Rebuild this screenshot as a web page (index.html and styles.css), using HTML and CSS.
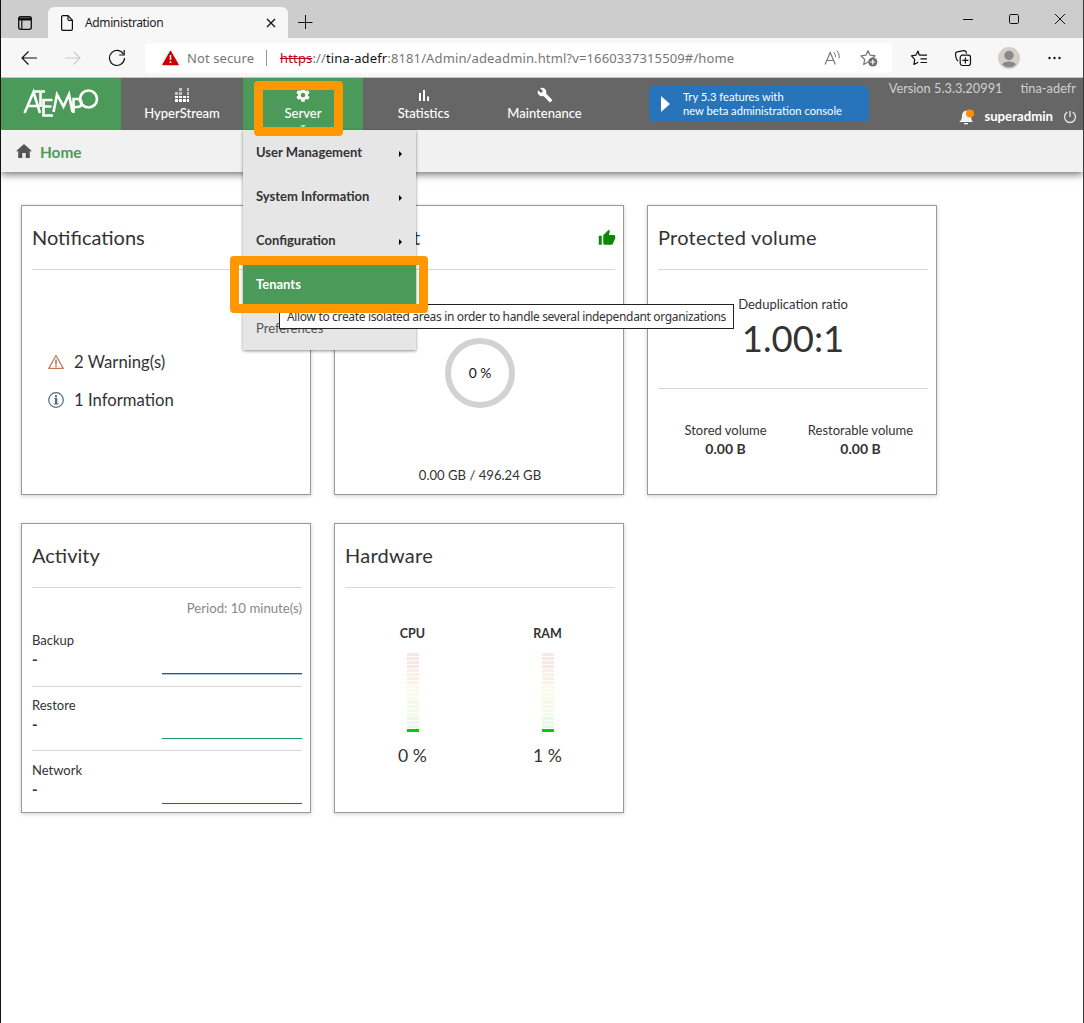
FILE: index.html
```html
<!DOCTYPE html>
<html lang="en">
<head>
<meta charset="utf-8">
<title>Administration</title>
<link rel="stylesheet" href="styles.css">
</head>
<body>
<div class="window">
  <div class="tabstrip">
    <svg class="tab-actions" width="16" height="16" viewBox="0 0 16 16"><rect x="1.7" y="1.7" width="12.6" height="12.6" rx="2" fill="none" stroke="#111" stroke-width="1.3"/><path d="M1.5 2.5h13v3h-13z" fill="#111"/><path d="M4.8 5v9" stroke="#111" stroke-width="1.2"/></svg>
    <div class="tab">
      <svg width="14" height="18" viewBox="0 0 14 18" fill="none" stroke="#111" stroke-width="1.2"><path d="M1.6 3a1.4 1.4 0 0 1 1.4-1.4h5l4.4 4.6v8.8a1.4 1.4 0 0 1-1.4 1.4H3A1.4 1.4 0 0 1 1.6 15z"/><path d="M8 1.8v3.4q0 1.1 1.1 1.1h3.3"/></svg>
      <span class="tab-title">Administration</span>
      <svg class="tab-close" width="10" height="10" viewBox="0 0 10 10"><path d="M1 1l8 8M9 1L1 9" stroke="#111" stroke-width="1.3"/></svg>
    </div>
    <svg class="tab-new" width="16" height="16" viewBox="0 0 16 16"><path d="M8.5 1v14M1 8.500h14.500" stroke="#111" stroke-width="1"/></svg>
    <div class="win-controls">
      <svg width="12" height="12" viewBox="0 0 12 12"><path d="M1 6.500h10" stroke="#111"/></svg>
      <svg width="12" height="12" viewBox="0 0 12 12"><rect x="1.500" y="1.500" width="9" height="9" rx="1.200" fill="none" stroke="#111"/></svg>
      <svg width="12" height="12" viewBox="0 0 12 12"><path d="M1 1l10 10M11 1L1 11" stroke="#111"/></svg>
    </div>
  </div>

  <div class="toolbar">
    <svg class="nav-back" width="18" height="16" viewBox="0 0 18 16" fill="none" stroke="#111" stroke-width="1.200"><path d="M17 8H2M8.500 1.500L2 8l6.500 6.500"/></svg>
    <svg class="nav-forward" width="18" height="16" viewBox="0 0 18 16" fill="none" stroke="#ccc" stroke-width="1.200"><path d="M1 8h15M9.500 1.500L16 8l-6.500 6.500"/></svg>
    <svg class="nav-reload" width="18" height="18" viewBox="0 0 18 18" fill="none" stroke="#111" stroke-width="1.200"><path d="M15.500 5.200A7.500 7.500 0 1 0 16.500 9"/><path d="M16.200 1v5h-5"/></svg>
    <div class="address">
      <svg width="17" height="16" viewBox="0 0 17 16"><path d="M8.500 1.500L16 14.500H1z" fill="#c00" stroke="#c00" stroke-width="1.500" stroke-linejoin="round"/><path d="M8.500 5v5M8.500 11.300v1.800" stroke="#fff" stroke-width="1.500"/></svg>
      <span class="insecure">Not secure</span>
      <span class="divider"></span>
      <span class="url"><s>https</s>://<b>tina-adefr</b>:8181/Admin/adeadmin.html?v=1660337315509#/home</span>
      <svg class="read-aloud" width="18" height="18" viewBox="0 0 18 18" fill="none" stroke="#767676" stroke-width="1.200"><path d="M1 15.500L6.200 3.500l5.200 12M2.800 11.500h6.800"/><path d="M9.800 3.200q2 2 1.600 5M12.800 1.500q3.200 3 2.400 7.800" stroke-width="1"/></svg>
      <svg class="add-fav" width="18" height="18" viewBox="0 0 18 18"><path d="M8 1.500l2 4.700 5 .5-3.700 3.300 1 2.400M8 13l-4.300 2.500 1-5L1 6.800l5-.6 2-4.700" fill="none" stroke="#767676" stroke-width="1.200" stroke-linejoin="round"/><circle cx="12.800" cy="13" r="4.600" fill="#6e6e6e"/><path d="M12.800 10.500v5M10.300 13h5" stroke="#fff" stroke-width="1.200"/></svg>
    </div>
    <div class="browser-tools">
      <svg width="18" height="18" viewBox="0 0 18 18" fill="none" stroke="#111" stroke-width="1.200" stroke-linejoin="round"><path d="M9.300 6.200L8 2 5.900 6.200 1.500 6.800l3.200 3.500-.8 5.200 4.300-2.300M9.300 6.200h7.700M10.500 9.800H17M10.500 13.500H17"/></svg>
      <svg width="18" height="18" viewBox="0 0 18 18" fill="none" stroke="#111" stroke-width="1.200"><rect x="6.200" y="6.200" width="10.300" height="10.300" rx="2.200"/><path d="M11.400 8.500v6M8.400 11.400h6M4 12Q2.300 10.500 2 8.500L1.500 5.200Q1.300 3.300 3.200 2.800L9.500 1.700Q12 1.500 12.600 4.500"/></svg>
      <svg width="22" height="22" viewBox="0 0 22 22"><circle cx="11" cy="11" r="11" fill="#d2cfcb"/><circle cx="11" cy="8.500" r="4.700" fill="#8b8987"/><path d="M4 17.500a7.500 4.700 0 0 1 14 0 10 10 0 0 1-14 0z" fill="#8b8987"/></svg>
      <svg width="16" height="4" viewBox="0 0 16 4" fill="#111"><circle cx="3.500" cy="2" r="1.200"/><circle cx="8.500" cy="2" r="1.200"/><circle cx="13.500" cy="2" r="1.200"/></svg>
    </div>
  </div>

  <header class="app-header">
    <div class="brand">
      <svg width="76" height="30" viewBox="0 0 76 30" fill="none" stroke="#fff" stroke-width="2.600"><path d="M1.500 25L10.500 4l6.500 21M5.500 18h9M11 3.500h11M17.500 3.500v15.500M29.500 12h-9v15.500h9.500M20.500 18.500h8M30.500 24L34 6.500l6.500 12L46 6.500l3.500 17.500M50.500 25V11h4q4 0 4 4t-4 4h-4"/><circle cx="65.500" cy="11" r="8.500"/></svg>
    </div>
    <nav class="main-nav">
      <div class="nav-item">
        <svg width="16" height="16" viewBox="0 0 16 16" fill="#fff"><path d="M1 12h3v3H1zM5 12h3v3H5zM9 12h3v3H9zM13 12h2v3h-2zM1 9h3v2H1zM5 9h3v2H5zM9 9h3v2H9zM13 9h2v2h-2z"/><path opacity=".6" d="M1 5h3v3H1zM5 5h3v3H5zM13 5h2v3h-2zM5 1h3v3H5zM13 1h2v3h-2z"/></svg>
        <span>HyperStream</span>
      </div>
      <div class="nav-item active">
        <svg width="16" height="16" viewBox="0 0 24 24" fill="#fff"><path d="M19.430 12.980c.04-.32.07-.64.07-.98s-.03-.66-.07-.98l2.110-1.650c.19-.15.24-.42.12-.64l-2-3.460c-.12-.22-.39-.3-.61-.22l-2.490 1c-.52-.4-1.080-.73-1.690-.98l-.38-2.650C14.460 2.180 14.250 2 14 2h-4c-.25 0-.46.18-.49.42l-.38 2.650c-.61.25-1.170.59-1.690.98l-2.490-1c-.23-.09-.49 0-.61.22l-2 3.460c-.13.22-.07.49.12.64l2.110 1.650c-.04.32-.07.65-.07.98s.03.66.07.98l-2.110 1.650c-.19.15-.24.42-.12.64l2 3.460c.12.22.39.3.61.22l2.490-1c.52.4 1.080.73 1.690.98l.38 2.650c.03.24.24.42.49.42h4c.25 0 .46-.18.49-.42l.38-2.650c.61-.25 1.170-.59 1.690-.98l2.490 1c.23.09.49 0 .61-.22l2-3.460c.12-.22.07-.49-.12-.64l-2.110-1.650zM12 15.500c-1.930 0-3.500-1.570-3.500-3.500s1.570-3.500 3.500-3.500 3.500 1.570 3.500 3.500-1.570 3.500-3.500 3.500z"/></svg>
        <span>Server</span>
        <i class="nav-caret"></i>
      </div>
      <div class="nav-item">
        <svg width="16" height="16" viewBox="0 0 16 16" fill="#fff"><path d="M3 6h2v8H3zM7 3h2v11H7zM11 9.500h2V14h-2z"/></svg>
        <span>Statistics</span>
      </div>
      <div class="nav-item">
        <svg width="16" height="16" viewBox="0 0 24 24" fill="#fff"><path d="M22.700 19l-9.100-9.100c.9-2.300.4-5-1.500-6.900-2-2-5-2.400-7.400-1.300L9 6 6 9 1.600 4.700C.4 7.100.9 10.100 2.900 12.100c1.900 1.900 4.600 2.400 6.900 1.500l9.100 9.100c.4.4 1 .4 1.400 0l2.300-2.300c.5-.4.5-1.100.1-1.400z"/></svg>
        <span>Maintenance</span>
      </div>
    </nav>
    <div class="beta">
      <svg width="10" height="16" viewBox="0 0 10 16"><path d="M1 0l9 8-9 8z" fill="#fff"/></svg>
      <span>Try 5.3 features with<br>new beta administration console</span>
    </div>
    <div class="account">
      <div class="account-top"><span class="version">Version 5.3.3.20991</span><span class="host">tina-adefr</span></div>
      <div class="account-user">
        <svg width="17" height="17" viewBox="0 0 17 17"><path d="M1 14q3-2 3-6 0-5 4.500-5.500Q13 3 13 8q0 4 2 6z" fill="#f2f2f2"/><path d="M6 15h4v1.300H6z" fill="#fff"/><circle cx="12" cy="5.500" r="4" fill="#ff8c00"/></svg>
        <span>superadmin</span>
        <svg width="14" height="14" viewBox="0 0 14 14" fill="none" stroke="#e0e0e0" stroke-width="1.400"><path d="M4.300 2.200a5.500 5.500 0 1 0 5.400 0M7 1v6"/></svg>
      </div>
    </div>

    <div class="menu">
      <div class="menu-item">User Management<i></i></div>
      <div class="menu-item">System Information<i></i></div>
      <div class="menu-item">Configuration<i></i></div>
      <div class="menu-item selected">Tenants</div>
      <div class="menu-item plain">Preferences</div>
    </div>
  </header>

  <div class="breadcrumb">
    <svg width="16" height="14" viewBox="0 0 16 14"><path d="M8 0l8 7.300h-2.200V14H9.700V9H6.300v5H2.200V7.300H0z" fill="#555"/></svg>
    <span>Home</span>
  </div>

  <main class="dashboard">
    <section class="card">
      <h2>Notifications</h2>
      <div class="notices">
        <div class="notice"><svg width="16" height="16" viewBox="0 0 16 16"><path d="M8 1.500L15.200 14.400H.8z" fill="none" stroke="#bd7b5c" stroke-width="1.200" stroke-linejoin="round"/><path d="M8 5.500v5M8 11.300v1.700" stroke="#bd7b5c" stroke-width="1.700"/></svg><span>2 Warning(s)</span></div>
        <div class="notice"><svg width="16" height="16" viewBox="0 0 16 16"><circle cx="8" cy="8" r="7.300" fill="none" stroke="#4f6d7a" stroke-width="1.200"/><path d="M6.300 6.500h2.500V12M6 12h4.500" fill="none" stroke="#4f6d7a" stroke-width="1"/><path d="M8 6.500V12M8 3.200v2" stroke="#4f6d7a" stroke-width="2"/></svg><span>1 Information</span></div>
      </div>
    </section>

    <section class="card">
      <h2 class="title-end">t<svg width="18" height="18" viewBox="0 0 24 24"><path d="M1 21h4V9H1v12zm22-11c0-1.100-.9-2-2-2h-6.310l.95-4.570.03-.32c0-.41-.17-.79-.44-1.060L14.170 1 7.590 7.590C7.220 7.950 7 8.450 7 9v10c0 1.100.9 2 2 2h9c.83 0 1.540-.5 1.840-1.220l3.020-7.050c.09-.23.14-.47.14-.73v-2z" fill="#0b8a00"/></svg></h2>
      <div class="storage">
        <div class="ring">0 %</div>
        <div class="usage">0.00 GB / 496.24 GB</div>
      </div>
    </section>

    <section class="card">
      <h2 class="spaced">Protected volume</h2>
      <div class="dedup"><span>Deduplication ratio</span><strong>1.00:1</strong></div>
      <div class="volumes">
        <div><span>Stored volume</span><b>0.00 B</b></div>
        <div><span>Restorable volume</span><b>0.00 B</b></div>
      </div>
    </section>

    <section class="card">
      <h2>Activity</h2>
      <div class="period">Period: 10 minute(s)</div>
      <div class="metric"><div class="label"><span>Backup</span><b>-</b></div><div class="spark blue soft"></div></div>
      <div class="metric"><div class="label"><span>Restore</span><b>-</b></div><div class="spark green"></div></div>
      <div class="metric last"><div class="label"><span>Network</span><b>-</b></div><div class="spark blue"></div></div>
    </section>

    <section class="card">
      <h2 class="spaced">Hardware</h2>
      <div class="meters">
        <div class="meter"><b>CPU</b>
          <div class="bars"><i class="r"></i><i class="r"></i><i class="r"></i><i class="r"></i><i class="o"></i><i class="o"></i><i class="o"></i><i class="o"></i><i class="y"></i><i class="y"></i><i class="y"></i><i class="y"></i><i class="l"></i><i class="l"></i><i class="l"></i><i class="l"></i><i class="g"></i><i class="g"></i><i class="g"></i><i class="on"></i></div>
          <span>0 %</span></div>
        <div class="meter"><b>RAM</b>
          <div class="bars"><i class="r"></i><i class="r"></i><i class="r"></i><i class="r"></i><i class="o"></i><i class="o"></i><i class="o"></i><i class="o"></i><i class="y"></i><i class="y"></i><i class="y"></i><i class="y"></i><i class="l"></i><i class="l"></i><i class="l"></i><i class="l"></i><i class="g"></i><i class="g"></i><i class="g"></i><i class="on"></i></div>
          <span>1 %</span></div>
      </div>
    </section>
  </main>

  <div class="tooltip">Allow to create isolated areas in order to handle several independant organizations</div>
  <div class="highlight highlight-server"></div>
  <div class="highlight highlight-tenants"></div>
</div>
</body>
</html>
```
FILE: styles.css
```css
* { box-sizing: border-box; }
body { margin: 0; background: #fff; font-family: "Lato", "Liberation Sans", sans-serif; font-size: 13px; color: #333; }
svg { display: block; flex: none; }

.window { position: relative; width: 1084px; height: 1023px; border-left: 1px solid #111; border-right: 1px solid #3a3a35; overflow: hidden; }

/* Browser chrome */
.tabstrip { display: flex; height: 38px; background: #cdcdcd; font-family: "Noto Sans", sans-serif; }
.tab-actions { margin: 15px 0 0 16px; }
.tab { display: flex; align-items: center; width: 240px; height: 31px; margin: 7px 0 0 15px; padding: 0 12px; border-radius: 6px 6px 0 0; background: #f7f7f7; }
.tab-title { margin-left: 11px; font-size: 12px; letter-spacing: -.38px; color: #222; }
.tab-close { margin-left: auto; }
.tab-new { margin: 14px 0 0 9px; }
.win-controls { display: flex; gap: 34px; margin: 13px 17px 0 auto; }

.toolbar { display: flex; align-items: center; height: 40px; background: #f7f7f7; border-bottom: 1px solid #c4c4c4; font-family: "Noto Sans", sans-serif; }
.nav-back { margin-left: 19px; }
.nav-forward { margin-left: 26px; }
.nav-reload { margin-left: 26px; }
.address { display: flex; align-items: center; width: 747px; height: 30px; margin-left: 19px; padding: 0 14px 0 17px; border-radius: 4px; background: #fff; font-size: 13px; color: #767676; }
.insecure { margin-left: 8px; letter-spacing: .1px; }
.divider { width: 1px; height: 16px; margin: 0 13px 0 12px; background: #999; }
.url { letter-spacing: .13px; white-space: nowrap; }
.url s { color: #c5001a; }
.url b { font-weight: 400; color: #111; }
.read-aloud { margin-left: auto; }
.add-fav { margin-left: 18px; }
.browser-tools { display: flex; align-items: center; gap: 26px; margin-left: 18px; }

/* Application header */
.app-header { position: relative; z-index: 2; display: flex; height: 52px; background: #666; color: #fff; }
.brand { width: 120px; padding: 10px 0 0 22px; background: #4c9a59; }
.main-nav { display: flex; }
.nav-item { position: relative; display: flex; flex-direction: column; align-items: center; width: 121px; padding-top: 9px; font-size: 13px; line-height: 16px; }
.nav-item:first-child { width: 122px; }
.nav-item span { margin-top: 2px; font-weight: 500; }
.nav-item.active { width: 120px; background: #4c9a59; }
.nav-caret { position: absolute; bottom: 2px; border: 3px solid transparent; border-top-color: #a6e8b0; border-bottom: 0; }
.beta { display: flex; align-items: center; width: 220px; height: 36px; margin: 8px 0 0 44px; padding-left: 11px; gap: 13px; border-radius: 5px; background: #2874bb; font-size: 11.2px; line-height: 14px; white-space: nowrap; }
.account { margin-left: auto; padding-right: 6px; }
.account-top { display: flex; justify-content: flex-end; gap: 18px; padding: 2px 1px 0 0; color: #d0d0d0; line-height: 17px; font-size: 12.8px; }
.account-user { display: flex; align-items: center; justify-content: flex-end; gap: 10px; margin-top: 11px; font-size: 13.2px; font-weight: 700; line-height: 17px; }
.account-user svg:first-child { margin-right: -1px; }

.menu { position: absolute; top: 52px; left: 242px; width: 173px; height: 220px; background: #e6e6e6; box-shadow: 0 1px 3px rgba(0,0,0,.45); color: #333; font-weight: 700; }
.menu-item { display: flex; align-items: center; justify-content: space-between; height: 44px; padding: 0 14px 0 13px; }
.menu-item i { margin-top: 4px; border: 3px solid transparent; border-left: 3px solid #000; border-right: 0; }
.menu-item.selected { background: #4c9a59; color: #fff; }
.menu-item.plain { font-weight: 400; color: #555; }

.breadcrumb { position: relative; display: flex; align-items: center; height: 42px; padding: 2px 0 0 15px; gap: 8px; background: #f1f1f1; box-shadow: 0 2px 8px rgba(0,0,0,.6); color: #4c9a59; font-size: 15.4px; font-weight: 700; }
.breadcrumb svg { margin-top: -3px; }

/* Dashboard */
.dashboard { display: grid; grid-template-columns: repeat(3, 290px); grid-auto-rows: 290px; gap: 28px 23px; padding: 33px 0 0 20px; }
.card { display: flex; flex-direction: column; padding: 0 8px 0 10px; border: 1px solid #999; background: #fff; box-shadow: 0 1px 4px rgba(0,0,0,.2); }
.card h2 { display: flex; align-items: center; justify-content: space-between; height: 64px; flex: none; margin: 0; padding-bottom: 1px; border-bottom: 1px solid #d8d8d8; font-size: 20px; font-weight: 400; line-height: 23px; }
.card h2.spaced { letter-spacing: .25px; }
.card h2.title-end { padding-left: 68px; }
.title-end svg { margin: 1px -1px 0 0; }

.notices { padding: 73px 0 0 16px; }
.notice { display: flex; align-items: center; gap: 10px; height: 38px; font-size: 16.7px; line-height: 20px; }

.storage { display: flex; flex-direction: column; align-items: center; padding-top: 68px; }
.ring { display: flex; align-items: center; justify-content: center; width: 70px; height: 70px; padding-bottom: 1px; border: 6px solid #d2d2d2; border-radius: 50%; color: #111; font-size: 13.8px; }
.usage { margin-top: 59px; line-height: 16px; font-size: 13.1px; }

.dedup { display: flex; flex-direction: column; align-items: center; height: 119px; padding-top: 26px; border-bottom: 1px solid #d8d8d8; line-height: 16px; }
.dedup strong { margin-top: 5px; font-size: 36.5px; font-weight: 400; line-height: 42px; }
.volumes { display: grid; grid-template-columns: 1fr 1fr; padding-top: 32px; }
.volumes div { display: flex; flex-direction: column; align-items: center; line-height: 19px; }
.volumes b { font-size: 14px; line-height: 17px; }
.volumes span, .dedup span { white-space: nowrap; }

.period { height: 34px; flex: none; padding-top: 12px; text-align: right; font-size: 13.2px; line-height: 16px; color: #888; }
.metric { display: flex; justify-content: space-between; height: 64px; flex: none; }
.metric + .metric { border-top: 1px solid #d8d8d8; }
.metric.last { height: 60px; }
.label { display: flex; flex-direction: column; padding-top: 9px; line-height: 19px; }
.last .label { padding-top: 10px; }
.label b { font-size: 15px; }
.spark { width: 140px; height: 52px; border-bottom: 1px solid; }
.last .spark { height: 53px; }
.spark.soft { box-shadow: 0 1px #a9c6dd; }
.spark.blue { border-color: #1a5f98; }
.spark.green { border-color: #1aa35c; }

.meters { display: grid; grid-template-columns: 1fr 1fr; padding-top: 37px; }
.meter { display: flex; flex-direction: column; align-items: center; line-height: 16px; }
.meter b { height: 16px; font-size: 12.5px; line-height: 18px; }
.bars { display: flex; flex-direction: column; gap: 1px; width: 12px; margin-top: 12px; }
.bars i { height: 3px; }
.r { background: #fbe6e6; }
.o { background: #fdeee6; }
.y { background: #fcfbe8; }
.l { background: #f3fbe8; }
.g { background: #e6fbe6; }
.on { background: #00cc0a; }
.meter span { margin-top: 13px; font-size: 17.6px; line-height: 22px; }

/* Overlays */
.tooltip { position: absolute; z-index: 3; left: 278px; top: 304px; width: 455px; height: 25px; padding-left: 7px; border: 1px solid #222; background: #fff; font-family: "Noto Sans", sans-serif; font-size: 12px; letter-spacing: -.34px; line-height: 24px; white-space: nowrap; }
.highlight { position: absolute; z-index: 4; border: 9px solid #ff9800; border-radius: 4px; }
.highlight-server { left: 253px; top: 81px; width: 89px; height: 55px; }
.highlight-tenants { left: 229px; top: 256px; width: 198px; height: 57px; }
```
